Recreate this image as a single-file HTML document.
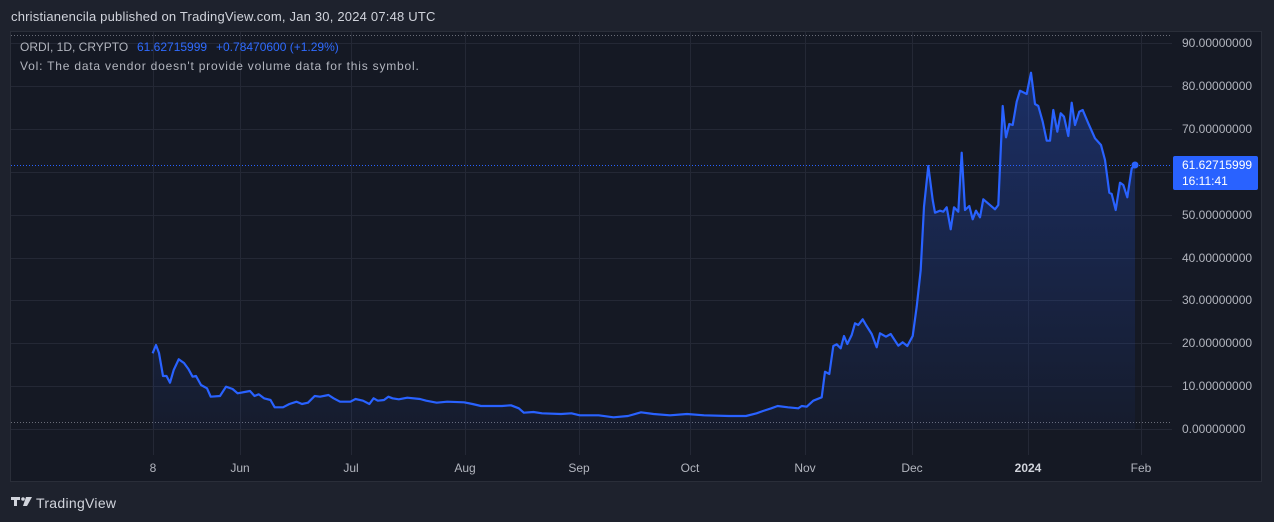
<!DOCTYPE html>
<html><head><meta charset="utf-8"><style>
html,body{margin:0;padding:0;width:1274px;height:522px;overflow:hidden;background:#1e222d;font-family:"Liberation Sans",sans-serif;}
svg{position:absolute;left:0;top:0}
</style></head><body>
<svg width="1274" height="522" viewBox="0 0 1274 522" xmlns="http://www.w3.org/2000/svg">
<defs><linearGradient id="g" x1="0" y1="0" x2="0" y2="1"><stop offset="0" stop-color="#2962ff" stop-opacity="0.3"/><stop offset="1" stop-color="#2962ff" stop-opacity="0.04"/></linearGradient></defs>
<rect x="0" y="0" width="1274" height="522" fill="#1e222d"/>
<text x="11" y="21" font-size="13" fill="#d1d4dc" letter-spacing="0.2">christianencila published on TradingView.com, Jan 30, 2024 07:48 UTC</text>
<rect x="10.5" y="31.5" width="1251" height="450" fill="#151924" stroke="#2a2e39"/>
<g stroke="#242835" stroke-width="1">
<line x1="11" y1="43.5" x2="1172" y2="43.5"/><line x1="11" y1="86.5" x2="1172" y2="86.5"/><line x1="11" y1="129.5" x2="1172" y2="129.5"/><line x1="11" y1="172.5" x2="1172" y2="172.5"/><line x1="11" y1="215.5" x2="1172" y2="215.5"/><line x1="11" y1="258.5" x2="1172" y2="258.5"/><line x1="11" y1="300.5" x2="1172" y2="300.5"/><line x1="11" y1="343.5" x2="1172" y2="343.5"/><line x1="11" y1="386.5" x2="1172" y2="386.5"/><line x1="11" y1="429.5" x2="1172" y2="429.5"/>
<line x1="153.5" y1="32" x2="153.5" y2="455"/><line x1="240.5" y1="32" x2="240.5" y2="455"/><line x1="351.5" y1="32" x2="351.5" y2="455"/><line x1="465.5" y1="32" x2="465.5" y2="455"/><line x1="579.5" y1="32" x2="579.5" y2="455"/><line x1="690.5" y1="32" x2="690.5" y2="455"/><line x1="805.5" y1="32" x2="805.5" y2="455"/><line x1="912.5" y1="32" x2="912.5" y2="455"/><line x1="1028.5" y1="32" x2="1028.5" y2="455"/><line x1="1141.5" y1="32" x2="1141.5" y2="455"/>
</g>
<line x1="11" y1="35.5" x2="1172" y2="35.5" stroke="#6a6d78" stroke-dasharray="1 2"/>
<line x1="11" y1="422.5" x2="1172" y2="422.5" stroke="#6a6d78" stroke-dasharray="1 2"/>
<polygon fill="url(#g)" points="152.6,353.3 156,345 159,353 163,376 166.5,376 170,382.7 173.7,370 178.7,359.3 184,363 188.4,369 192.6,376.7 196,376 201,385 207,388.3 210.7,396.7 220,396 226,386.7 232.6,389 237.6,393.3 250,391 254.5,396 258.7,394.3 264,398.3 270.5,400 274.7,407.3 283,407.3 289.4,404 296.6,401.7 302,404 308,402.7 314.7,396 320,396.7 328.5,395 333.6,398.3 340,401.7 350.4,401.7 355.5,399 363,400.7 369.4,404 373.6,398.3 377.8,400.7 384,400 388.3,396.7 392.5,398.3 398.8,399.3 407.3,397.7 420,399 426.2,400.7 436.7,402.7 447.2,401.7 464,402.3 472.5,404 481,406 502,406 511,405.3 518.8,408.3 523.8,412.7 533.5,412 542,413.3 561,414 571.4,413.3 579.8,415.3 598.7,415.3 613.5,417.3 628,416 641,412.3 653.5,414 670,415.3 687,414 704,415.3 729,416 746,416 756.6,413.3 763,411 771.3,408.3 777.6,406 788,407.3 798.3,408.3 801.7,406 806.7,406.7 813.3,400.7 821.7,397.3 825,371.7 829.3,374 833.3,346 836.7,344.3 840.7,348.3 844,336 847.3,344 851.7,335 855,323.3 858.3,325 862.7,319.3 866,325 871.7,334 876.7,347.3 880,333.3 886,336.7 890.7,334 898.3,345.7 902.7,342.3 907.3,346 912.7,336 916.7,306.7 920.7,270 924,206.7 928.3,166 932.7,200 935,212.7 940,210.7 943.3,211.7 946.7,207.3 950.7,229.3 954,207.3 958.3,211.7 961.7,152.7 965,210 969.3,206 972.7,219.3 976,210.7 980,217.3 983.3,199.3 995,209.3 998.3,205 1002.7,106 1006,137.3 1009.3,124 1012.7,125 1016.7,101.7 1020,90.7 1026.7,94 1031,72.7 1035,104 1038.3,106 1042.7,121.7 1046.7,140.7 1050,140.7 1053.3,110 1057.3,131.7 1060.7,113.3 1064,116.7 1068.3,136 1071.7,102.7 1075,125 1079.3,111.7 1082.7,110 1088.3,123.3 1095,138.3 1101,145 1105,160 1109.3,192.7 1111.7,194 1115.7,210 1120,182.7 1123.3,185 1127.3,197.3 1131.7,168.3 1135,165.3 1135,429 152.6,429"/>
<polyline fill="none" stroke="#2962ff" stroke-width="2.2" stroke-linejoin="round" points="152.6,353.3 156,345 159,353 163,376 166.5,376 170,382.7 173.7,370 178.7,359.3 184,363 188.4,369 192.6,376.7 196,376 201,385 207,388.3 210.7,396.7 220,396 226,386.7 232.6,389 237.6,393.3 250,391 254.5,396 258.7,394.3 264,398.3 270.5,400 274.7,407.3 283,407.3 289.4,404 296.6,401.7 302,404 308,402.7 314.7,396 320,396.7 328.5,395 333.6,398.3 340,401.7 350.4,401.7 355.5,399 363,400.7 369.4,404 373.6,398.3 377.8,400.7 384,400 388.3,396.7 392.5,398.3 398.8,399.3 407.3,397.7 420,399 426.2,400.7 436.7,402.7 447.2,401.7 464,402.3 472.5,404 481,406 502,406 511,405.3 518.8,408.3 523.8,412.7 533.5,412 542,413.3 561,414 571.4,413.3 579.8,415.3 598.7,415.3 613.5,417.3 628,416 641,412.3 653.5,414 670,415.3 687,414 704,415.3 729,416 746,416 756.6,413.3 763,411 771.3,408.3 777.6,406 788,407.3 798.3,408.3 801.7,406 806.7,406.7 813.3,400.7 821.7,397.3 825,371.7 829.3,374 833.3,346 836.7,344.3 840.7,348.3 844,336 847.3,344 851.7,335 855,323.3 858.3,325 862.7,319.3 866,325 871.7,334 876.7,347.3 880,333.3 886,336.7 890.7,334 898.3,345.7 902.7,342.3 907.3,346 912.7,336 916.7,306.7 920.7,270 924,206.7 928.3,166 932.7,200 935,212.7 940,210.7 943.3,211.7 946.7,207.3 950.7,229.3 954,207.3 958.3,211.7 961.7,152.7 965,210 969.3,206 972.7,219.3 976,210.7 980,217.3 983.3,199.3 995,209.3 998.3,205 1002.7,106 1006,137.3 1009.3,124 1012.7,125 1016.7,101.7 1020,90.7 1026.7,94 1031,72.7 1035,104 1038.3,106 1042.7,121.7 1046.7,140.7 1050,140.7 1053.3,110 1057.3,131.7 1060.7,113.3 1064,116.7 1068.3,136 1071.7,102.7 1075,125 1079.3,111.7 1082.7,110 1088.3,123.3 1095,138.3 1101,145 1105,160 1109.3,192.7 1111.7,194 1115.7,210 1120,182.7 1123.3,185 1127.3,197.3 1131.7,168.3 1135,165.3"/>
<line x1="11" y1="165.5" x2="1172" y2="165.5" stroke="#2962ff" stroke-dasharray="1 2"/>
<circle cx="1135" cy="165" r="3.5" fill="#2962ff"/>
<rect x="1173" y="156" width="85" height="34" rx="2" fill="#2962ff"/>
<text x="1182" y="169" font-size="12" fill="#fff">61.62715999</text>
<text x="1182" y="185" font-size="12" fill="#fff">16:11:41</text>
<g font-size="12" fill="#b2b5be">
<text x="1182" y="47">90.00000000</text><text x="1182" y="90">80.00000000</text><text x="1182" y="133">70.00000000</text><text x="1182" y="219">50.00000000</text><text x="1182" y="262">40.00000000</text><text x="1182" y="304">30.00000000</text><text x="1182" y="347">20.00000000</text><text x="1182" y="390">10.00000000</text><text x="1182" y="433">0.00000000</text>
</g>
<g font-size="12" fill="#b2b5be" text-anchor="middle">
<text x="153" y="472">8</text><text x="240" y="472">Jun</text><text x="351" y="472">Jul</text><text x="465" y="472">Aug</text><text x="579" y="472">Sep</text><text x="690" y="472">Oct</text><text x="805" y="472">Nov</text><text x="912" y="472">Dec</text><text x="1028" y="472" font-weight="bold" fill="#d1d4dc">2024</text><text x="1141" y="472">Feb</text>
</g>
<text x="20" y="51" font-size="12" fill="#b2b5be">ORDI, 1D, CRYPTO</text>
<text x="137" y="51" font-size="12" fill="#2f6bff">61.62715999</text>
<text x="216" y="51" font-size="12" fill="#2f6bff">+0.78470600 (+1.29%)</text>
<text x="20" y="70" font-size="12" fill="#b2b5be" letter-spacing="0.8">Vol: The data vendor doesn't provide volume data for this symbol.</text>
<g fill="#d1d4dc">
<path d="M11 497h9v3h-3v6h-3v-6h-3z"/><circle cx="23" cy="499" r="1.8"/><path d="M26 497h6l-5 9h-4z"/>
</g>
<text x="36" y="508" font-size="14" fill="#d1d4dc" letter-spacing="0.3">TradingView</text>
</svg>
</body></html>
